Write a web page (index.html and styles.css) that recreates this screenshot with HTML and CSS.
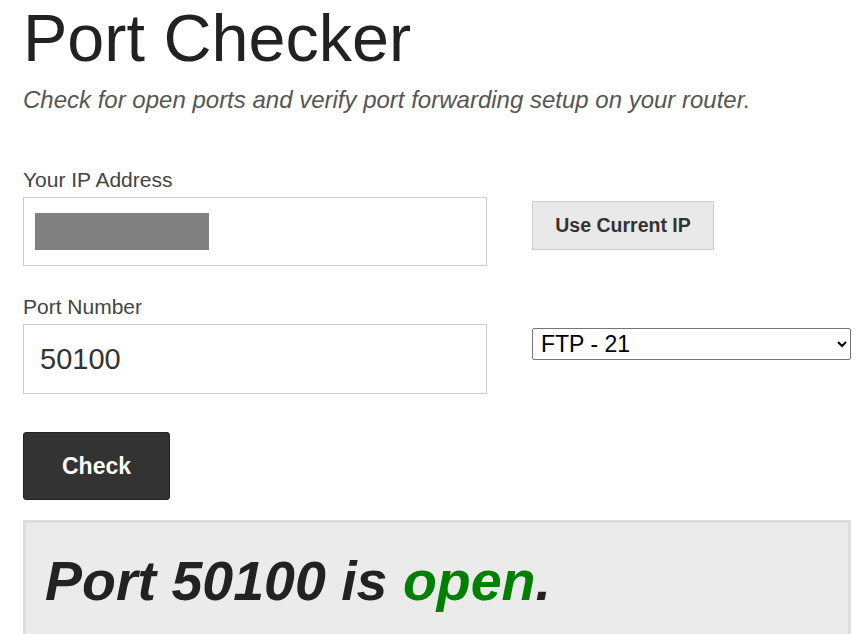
FILE: index.html
```html
<!DOCTYPE html>
<html lang="en">
<head>
<meta charset="utf-8">
<title>Port Checker</title>
<link rel="stylesheet" href="styles.css">
</head>
<body>
<main class="page">
  <h1 class="title">Port Checker</h1>
  <p class="subtitle">Check for open ports and verify port forwarding setup on your router.</p>

  <form class="checker">
    <div class="row row-ip">
      <div class="field">
        <label class="label" for="ip">Your IP Address</label>
        <div class="input input-ip" id="ip"><span class="redact"></span></div>
      </div>
      <div class="side">
        <button type="button" class="btn-light">Use Current IP</button>
      </div>
    </div>

    <div class="row row-port">
      <div class="field">
        <label class="label" for="port">Port Number</label>
        <input class="input input-port" id="port" type="text" value="50100">
      </div>
      <div class="side">
        <select class="preset">
          <option>FTP - 21</option>
          <option>SSH - 22</option>
          <option>HTTP - 80</option>
        </select>
      </div>
    </div>

    <button type="button" class="btn-dark">Check</button>
  </form>

  <section class="result">
    <h2 class="result-text">Port 50100 is <span class="open">open</span>.</h2>
  </section>
</main>
</body>
</html>
```

FILE: styles.css
```css
html, body {
  margin: 0;
  padding: 0;
  background: #fff;
}

body {
  font-family: "Liberation Sans", Arial, sans-serif;
  color: #222;
}

.page {
  padding: 0 8px 0 23px;
}

.title {
  margin: 0;
  font-size: 66.5px;
  font-weight: 400;
  color: #222;
  line-height: 76px;
}

.subtitle {
  margin: 10px 0 0;
  font-size: 24px;
  font-style: italic;
  color: #555;
  line-height: 28px;
}

.checker {
  margin-top: 54px;
}

.row {
  display: grid;
  grid-template-columns: 464px 319px;
  column-gap: 45px;
}

.row-port {
  margin-top: 29px;
}

.field {
  display: flex;
  flex-direction: column;
}

.label {
  font-size: 21px;
  line-height: 24px;
  color: #444;
  margin-bottom: 5px;
}

.input {
  box-sizing: border-box;
  width: 464px;
  height: 69px;
  border: 1px solid #ccc;
  background: #fff;
  margin: 0;
}

.input-ip {
  padding: 15px 11px;
}

.redact {
  display: block;
  width: 174px;
  height: 37px;
  background: #808080;
}

.input-port {
  height: 70px;
  padding: 0 16px;
  font-family: "Liberation Sans", Arial, sans-serif;
  font-size: 29px;
  color: #333;
  outline: none;
}

.side {
  display: flex;
  align-items: flex-start;
}

.row-ip .side {
  padding-top: 33px;
}

.row-port .side {
  padding-top: 33px;
}

.btn-light {
  box-sizing: border-box;
  height: 49px;
  width: 182px;
  padding: 0;
  background: #e9e9e9;
  border: 1px solid #ccc;
  border-radius: 0;
  font-family: "Liberation Sans", Arial, sans-serif;
  font-size: 19.5px;
  font-weight: 700;
  color: #333;
}

.preset {
  box-sizing: border-box;
  width: 319px;
  height: 32px;
  border: 1px solid #767676;
  border-radius: 2px;
  background: #fff;
  font-family: "Liberation Sans", Arial, sans-serif;
  font-size: 23px;
  color: #000;
  padding: 0 4px;
}

.btn-dark {
  display: block;
  box-sizing: border-box;
  margin-top: 38px;
  width: 147px;
  height: 68px;
  padding: 0;
  background: #333;
  border: 1px solid #222;
  border-radius: 3px;
  color: #fff;
  font-family: "Liberation Sans", Arial, sans-serif;
  font-size: 23px;
  font-weight: 700;
}

.result {
  margin-top: 20px;
  width: 828px;
  box-sizing: border-box;
  background: #ebebeb;
  border: 3px solid #ddd;
  padding: 26px 19px 30px;
}

.result-text {
  margin: 0;
  font-size: 55.5px;
  font-weight: 700;
  font-style: italic;
  color: #222;
}

.open {
  color: #008000;
}
```
